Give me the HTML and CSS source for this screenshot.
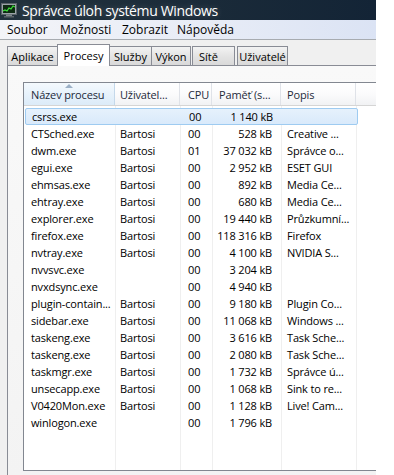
FILE: index.html
```html
<!DOCTYPE html>
<html lang="cs">
<head>
    <meta charset="UTF-8" />
    <title>Správce úloh systému Windows</title>
    <link rel="stylesheet" href="styles.css">
</head>
<body>

<div id="window">
    <div id="titlebar">
        <svg class="app-icon" width="16" height="16" viewBox="0 0 16 16">
            <rect x="0.5" y="1.5" width="15" height="11" fill="#9aa3a8" stroke="#5b6469"/>
            <rect x="2" y="3" width="12" height="8" fill="#0d2a12"/>
            <polyline points="2,9 4,8 6,9 8,6 10,7 12,4 14,5" fill="none" stroke="#3ee03a" stroke-width="1.2"/>
            <rect x="5" y="12.5" width="6" height="2" fill="#7d868b"/>
            <rect x="3" y="14" width="10" height="1.5" fill="#5b6469"/>
        </svg>
        <span class="title">Správce úloh systému Windows</span>
    </div>

    <div id="menubar">
        <span class="menu-item m1">Soubor</span>
        <span class="menu-item m2">Možnosti</span>
        <span class="menu-item m3">Zobrazit</span>
        <span class="menu-item">Nápověda</span>
    </div>

    <div id="tabs">
        <div class="tab t-apps">Aplikace</div>
        <div class="tab active t-proc">Procesy</div>
        <div class="tab t-svc">Služby</div>
        <div class="tab t-perf">Výkon</div>
        <div class="tab t-net">Sítě</div>
        <div class="tab t-users">Uživatelé</div>
    </div>

    <div id="panel">
        <div id="listview">
            <div class="row header">
                <div class="cell name sorted">
                    <span class="sort-arrow"></span>Název procesu
                </div>
                <div class="cell user">Uživatel...</div>
                <div class="cell cpu">CPU</div>
                <div class="cell mem head-mem">Paměť (s...</div>
                <div class="cell desc">Popis</div>
                <div class="cell fill"></div>
            </div>

            <div class="rows">
                <div class="row selected"><div class="cell name">csrss.exe</div><div class="cell user"></div><div class="cell cpu">00</div><div class="cell mem">1 140 kB</div><div class="cell desc"></div><div class="cell fill"></div></div>
                <div class="row"><div class="cell name">CTSched.exe</div><div class="cell user">Bartosi</div><div class="cell cpu">00</div><div class="cell mem">528 kB</div><div class="cell desc">Creative ...</div><div class="cell fill"></div></div>
                <div class="row"><div class="cell name">dwm.exe</div><div class="cell user">Bartosi</div><div class="cell cpu">01</div><div class="cell mem">37 032 kB</div><div class="cell desc">Správce o...</div><div class="cell fill"></div></div>
                <div class="row"><div class="cell name">egui.exe</div><div class="cell user">Bartosi</div><div class="cell cpu">00</div><div class="cell mem">2 952 kB</div><div class="cell desc">ESET GUI</div><div class="cell fill"></div></div>
                <div class="row"><div class="cell name">ehmsas.exe</div><div class="cell user">Bartosi</div><div class="cell cpu">00</div><div class="cell mem">892 kB</div><div class="cell desc">Media Ce...</div><div class="cell fill"></div></div>
                <div class="row"><div class="cell name">ehtray.exe</div><div class="cell user">Bartosi</div><div class="cell cpu">00</div><div class="cell mem">680 kB</div><div class="cell desc">Media Ce...</div><div class="cell fill"></div></div>
                <div class="row"><div class="cell name">explorer.exe</div><div class="cell user">Bartosi</div><div class="cell cpu">00</div><div class="cell mem">19 440 kB</div><div class="cell desc">Průzkumní...</div><div class="cell fill"></div></div>
                <div class="row"><div class="cell name">firefox.exe</div><div class="cell user">Bartosi</div><div class="cell cpu">00</div><div class="cell mem">118 316 kB</div><div class="cell desc">Firefox</div><div class="cell fill"></div></div>
                <div class="row"><div class="cell name">nvtray.exe</div><div class="cell user">Bartosi</div><div class="cell cpu">00</div><div class="cell mem">4 100 kB</div><div class="cell desc">NVIDIA S...</div><div class="cell fill"></div></div>
                <div class="row"><div class="cell name">nvvsvc.exe</div><div class="cell user"></div><div class="cell cpu">00</div><div class="cell mem">3 204 kB</div><div class="cell desc"></div><div class="cell fill"></div></div>
                <div class="row"><div class="cell name">nvxdsync.exe</div><div class="cell user"></div><div class="cell cpu">00</div><div class="cell mem">4 940 kB</div><div class="cell desc"></div><div class="cell fill"></div></div>
                <div class="row"><div class="cell name">plugin-contain...</div><div class="cell user">Bartosi</div><div class="cell cpu">00</div><div class="cell mem">9 180 kB</div><div class="cell desc">Plugin Co...</div><div class="cell fill"></div></div>
                <div class="row"><div class="cell name">sidebar.exe</div><div class="cell user">Bartosi</div><div class="cell cpu">00</div><div class="cell mem">11 068 kB</div><div class="cell desc">Windows ...</div><div class="cell fill"></div></div>
                <div class="row"><div class="cell name">taskeng.exe</div><div class="cell user">Bartosi</div><div class="cell cpu">00</div><div class="cell mem">3 616 kB</div><div class="cell desc">Task Sche...</div><div class="cell fill"></div></div>
                <div class="row"><div class="cell name">taskeng.exe</div><div class="cell user">Bartosi</div><div class="cell cpu">00</div><div class="cell mem">2 080 kB</div><div class="cell desc">Task Sche...</div><div class="cell fill"></div></div>
                <div class="row"><div class="cell name">taskmgr.exe</div><div class="cell user">Bartosi</div><div class="cell cpu">00</div><div class="cell mem">1 732 kB</div><div class="cell desc">Správce ú...</div><div class="cell fill"></div></div>
                <div class="row"><div class="cell name">unsecapp.exe</div><div class="cell user">Bartosi</div><div class="cell cpu">00</div><div class="cell mem">1 068 kB</div><div class="cell desc">Sink to re...</div><div class="cell fill"></div></div>
                <div class="row"><div class="cell name">V0420Mon.exe</div><div class="cell user">Bartosi</div><div class="cell cpu">00</div><div class="cell mem">1 128 kB</div><div class="cell desc">Live! Cam...</div><div class="cell fill"></div></div>
                <div class="row"><div class="cell name">winlogon.exe</div><div class="cell user"></div><div class="cell cpu">00</div><div class="cell mem">1 796 kB</div><div class="cell desc"></div><div class="cell fill"></div></div>
            </div>
        </div>
    </div>
</div>

</body>
</html>
```

FILE: styles.css
```css
* { box-sizing: border-box; }
body {
    margin: 0;
    background: #fff;
    font-family: 'Open Sans', 'Noto Sans', sans-serif;
    font-size: 11px;
    color: #000;
    width: 394px;
    height: 475px;
    overflow: hidden;
}
#window {
    width: 376px;
    height: 475px;
    background: #f0f0f0;
    overflow: hidden;
    display: flex;
    flex-direction: column;
}
#titlebar {
    height: 20px;
    flex-shrink: 0;
    display: flex;
    align-items: center;
    gap: 5px;
    padding-left: 1px;
    background: linear-gradient(to right, #22323d, #1b2b39 50%, #132436);
    color: #fff;
}
.app-icon { flex-shrink: 0; }
.title {
    font-size: 14px;
    letter-spacing: -0.35px;
    text-shadow: 0 0 6px rgba(255,255,255,0.25);
}
#menubar {
    height: 20px;
    flex-shrink: 0;
    display: flex;
    align-items: center;
    padding-left: 7px;
    background: linear-gradient(to right, #f3f4f8, #e6ebf6 60%, #dbe3f4);
    border-bottom: 1px solid #a7abb0;
    font-size: 12px;
}
.menu-item { flex-shrink: 0; }
.m1 { width: 53px; }
.m2 { width: 62px; }
.m3 { width: 55px; }
#tabs {
    height: 25px;
    flex-shrink: 0;
    display: flex;
    align-items: flex-end;
    padding-left: 7px;
}
.tab {
    height: 19px;
    flex-shrink: 0;
    display: flex;
    align-items: center;
    justify-content: center;
    font-size: 11px;
    border: 1px solid #898c95;
    border-bottom: none;
    border-right: none;
    background: linear-gradient(#f3f3f3, #e4e4e4 50%, #d9d9d9);
}
.t-apps { width: 50px; }
.t-proc { width: 53px; }
.t-svc { width: 41px; }
.t-perf { width: 40px; border-right: 1px solid #898c95; }
.t-net { width: 43px; margin-left: 1px; border-right: 1px solid #898c95; justify-content: flex-start; padding-left: 6px; }
.t-users { width: 51px; margin-left: 2px; border-right: 1px solid #898c95; }
.tab.active {
    height: 22px;
    background: #fff;
    border-right: 1px solid #898c95;
    margin-bottom: -1px;
    position: relative;
}
.tab.active + .tab { border-left: none; }
#panel {
    flex: 1;
    border-top: 1px solid #898c95;
    border-left: 1px solid #898c95;
    margin-left: 7px;
    background: linear-gradient(#f9f9f9, #f3f3f3);
    padding: 16px 0 4px 15px;
    display: flex;
}
#listview {
    flex: 1;
    border: 1px solid #828790;
    border-right: none;
    background: #fff;
    display: flex;
    flex-direction: column;
    height: 389px;
}
.row {
    display: flex;
    height: 17px;
}
.cell {
    flex-shrink: 0;
    padding: 0 6px;
    white-space: nowrap;
    overflow: hidden;
    display: flex;
    align-items: center;
    letter-spacing: -0.15px;
    border-right: 1px solid #efefef;
}
.name { width: 91px; padding-left: 7px; }
.user { width: 65px; padding-left: 5px; }
.cpu { width: 32px; padding-left: 8px; }
.mem { width: 69px; justify-content: flex-end; padding-right: 8px; }
.desc { width: 75px; padding-left: 6px; }
.fill { flex: 1; border-right: none; }
.row.header {
    height: 23px;
    background: linear-gradient(#ffffff, #fbfbfc 50%, #f1f2f4);
    border-bottom: 1px solid #d5d5d5;
    color: #1d2a3a;
}
.header .cell { border-right: 1px solid #dfe2e8; }
.header .cell.fill { border-right: none; }
.header .head-mem { justify-content: flex-start; padding-left: 7px; }
.header .sorted {
    position: relative;
    background: linear-gradient(#f4f9fd, #e7f2fb 50%, #dcebf8);
    border-right-color: #c4d8ea;
}
.sort-arrow {
    position: absolute;
    left: 41px;
    top: 1px;
    height: 4px;
    width: 0;
    border-left: 4px solid transparent;
    border-right: 4px solid transparent;
    border-bottom: 4px solid #9bb0c6;
}
.rows {
    flex: 1;
    display: flex;
    flex-direction: column;
    padding-top: 2px;
    background: linear-gradient(to right, transparent 91px, #efefef 91px, #efefef 92px, transparent 92px,
        transparent 156px, #efefef 156px, #efefef 157px, transparent 157px,
        transparent 188px, #efefef 188px, #efefef 189px, transparent 189px,
        transparent 257px, #efefef 257px, #efefef 258px, transparent 258px,
        transparent 332px, #efefef 332px, #efefef 333px, transparent 333px);
}
.rows .cell { border-right-color: transparent; }
.row.selected {
    background: linear-gradient(#e6f1fc, #d9eafb);
    border: 1px solid #9ecbf1;
    border-radius: 2px;
    width: 333px;
    margin-left: 1px;
}
.row.selected .cell { margin-top: -1px; }
.row.selected .name { width: 90px; padding-left: 6px; }
```
